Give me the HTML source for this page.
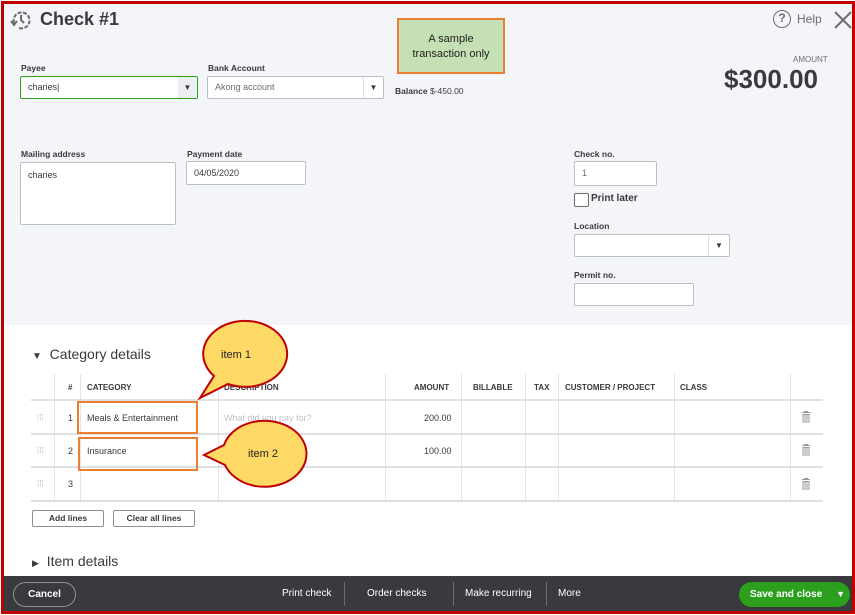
<!DOCTYPE html>
<html><head><style>
*{box-sizing:border-box;margin:0;padding:0}
body{width:855px;height:615px;position:relative;overflow:hidden;background:#fff;font-family:"Liberation Sans",sans-serif;color:#393a3d}
.a{position:absolute}
.lbl{font-size:8.5px;font-weight:bold;color:#393a3d}
.inp{background:#fff;border:1px solid #babec5;border-radius:2px;font-size:9px;padding-left:7px}
.th{font-size:8px;font-weight:bold;top:383px}
.td{font-size:9px}
</style></head><body>
<div class="a" style="left:2px;top:2px;width:851px;height:323px;background:#f4f5f8"></div>
<!-- header -->
<svg class="a" style="left:10px;top:9px" width="22" height="22" viewBox="0 0 22 22"><path d="M4 14 A8 8 0 1 1 9 19" fill="none" stroke="#6b6c72" stroke-width="2" stroke-dasharray="4 1.5"/><path d="M11 6 V11 L14 14" fill="none" stroke="#6b6c72" stroke-width="2"/><path d="M1 12 L4 16 L7 12" fill="none" stroke="#6b6c72" stroke-width="2"/></svg>
<div class="a" style="left:40px;top:9px;font-size:18px;font-weight:bold">Check #1</div>
<div class="a" style="left:773px;top:10px;width:18px;height:18px;border:1.6px solid #6b6c72;border-radius:50%;font-size:12px;font-weight:bold;text-align:center;line-height:15px;color:#6b6c72">?</div>
<div class="a" style="left:797px;top:12px;font-size:12px;color:#6b6c72">Help</div>
<svg class="a" style="left:833px;top:10px" width="20" height="20"><path d="M2 2L18 18M18 2L2 18" stroke="#6b6c72" stroke-width="2"/></svg>
<div class="a" style="left:397px;top:18px;width:108px;height:56px;background:#c5e0b4;border:2.5px solid #ed7d31;font-size:11px;text-align:center;padding-top:12px;line-height:15px;color:#222">A sample<br>transaction only</div>
<div class="a" style="left:793px;top:55px;font-size:8px;color:#6b6c72">AMOUNT</div>
<div class="a" style="left:724px;top:64px;font-size:26px;font-weight:bold;color:#393a3d">$300.00</div>
<!-- fields -->
<div class="a lbl" style="left:21px;top:63px">Payee</div>
<div class="a inp" style="left:20px;top:76px;width:178px;height:23px;border-color:#2ca01c;line-height:21px">charies|</div>
<div class="a" style="left:178px;top:77px;width:19px;height:21px;background:#eceef1;font-size:8px;text-align:center;line-height:21px">▼</div>
<div class="a lbl" style="left:208px;top:63px">Bank Account</div>
<div class="a inp" style="left:207px;top:76px;width:177px;height:23px;line-height:21px;color:#6b6c72">Akong account</div>
<div class="a" style="left:363px;top:77px;width:20px;height:21px;border-left:1px solid #dcdee2;font-size:8px;text-align:center;line-height:21px">▼</div>
<div class="a" style="left:395px;top:86px;font-size:8.5px;font-weight:bold;color:#393a3d">Balance <span style="font-weight:normal">$-450.00</span></div>
<div class="a lbl" style="left:21px;top:149px">Mailing address</div>
<div class="a inp" style="left:20px;top:162px;width:156px;height:63px;padding-top:7px">charies</div>
<div class="a lbl" style="left:187px;top:149px">Payment date</div>
<div class="a inp" style="left:186px;top:161px;width:120px;height:24px;line-height:22px">04/05/2020</div>
<div class="a lbl" style="left:574px;top:149px">Check no.</div>
<div class="a inp" style="left:574px;top:161px;width:83px;height:25px;line-height:23px;color:#6b6c72">1</div>
<div class="a" style="left:574px;top:193px;width:15px;height:14px;border:1.5px solid #6b6c72;border-radius:2px;background:#fff"></div>
<div class="a" style="left:591px;top:193px;font-size:10px;font-weight:bold">Print later</div>
<div class="a lbl" style="left:574px;top:221px">Location</div>
<div class="a inp" style="left:574px;top:234px;width:156px;height:23px"></div>
<div class="a" style="left:708px;top:235px;width:21px;height:21px;border-left:1px solid #dcdee2;font-size:8px;text-align:center;line-height:21px">▼</div>
<div class="a lbl" style="left:574px;top:270px">Permit no.</div>
<div class="a inp" style="left:574px;top:283px;width:120px;height:23px"></div>
<!-- category -->
<div class="a" style="left:32px;top:346px;font-size:14px"><span style="font-size:10px;color:#393a3d">▼</span>&nbsp; Category details</div>
<svg class="a" style="left:31px;top:374px" width="792" height="128">
<g stroke="#e3e5e8" stroke-width="1">
<line x1="23.5" y1="0" x2="23.5" y2="127"/><line x1="49.5" y1="0" x2="49.5" y2="127"/><line x1="187.5" y1="0" x2="187.5" y2="127"/><line x1="354.5" y1="0" x2="354.5" y2="127"/><line x1="430.5" y1="0" x2="430.5" y2="127"/><line x1="494.5" y1="0" x2="494.5" y2="127"/><line x1="527.5" y1="0" x2="527.5" y2="127"/><line x1="643.5" y1="0" x2="643.5" y2="127"/><line x1="759.5" y1="0" x2="759.5" y2="127"/></g>
<g stroke="#d4d7dc" stroke-width="1.5"><line x1="0" y1="26" x2="792" y2="26"/><line x1="0" y1="60" x2="792" y2="60"/><line x1="0" y1="93" x2="792" y2="93"/><line x1="0" y1="127" x2="792" y2="127"/></g>
</svg>
<div class="a th" style="left:68px">#</div>
<div class="a th" style="left:87px">CATEGORY</div>
<div class="a th" style="left:224px">DESCRIPTION</div>
<div class="a th" style="left:414px">AMOUNT</div>
<div class="a th" style="left:473px">BILLABLE</div>
<div class="a th" style="left:534px">TAX</div>
<div class="a th" style="left:565px">CUSTOMER / PROJECT</div>
<div class="a th" style="left:680px">CLASS</div>
<div class="a td" style="left:37px;top:413px;color:#aaa;font-size:8px">⁞⁞⁞</div>
<div class="a td" style="left:37px;top:446px;color:#aaa;font-size:8px">⁞⁞⁞</div>
<div class="a td" style="left:37px;top:479px;color:#aaa;font-size:8px">⁞⁞⁞</div>
<div class="a td" style="left:68px;top:413px">1</div>
<div class="a td" style="left:68px;top:446px">2</div>
<div class="a td" style="left:68px;top:479px">3</div>
<div class="a td" style="left:87px;top:413px">Meals &amp; Entertainment</div>
<div class="a td" style="left:87px;top:446px">Insurance</div>
<div class="a td" style="left:224px;top:413px;color:#c0c2c6">What did you pay for?</div>
<div class="a td" style="left:424px;top:413px">200.00</div>
<div class="a td" style="left:424px;top:446px">100.00</div>
<svg class="a" style="left:801px;top:411px" width="10" height="80"><g fill="none" stroke="#999" stroke-width="1"><path d="M1 1.5H9M3 0.5H7M2 3.5H8V11H2ZM4 4V10M6 4V10"/><path transform="translate(0,33)" d="M1 1.5H9M3 0.5H7M2 3.5H8V11H2ZM4 4V10M6 4V10"/><path transform="translate(0,67)" d="M1 1.5H9M3 0.5H7M2 3.5H8V11H2ZM4 4V10M6 4V10"/></g></svg>
<div class="a" style="left:77px;top:401px;width:121px;height:33px;border:2.5px solid #ed7d31"></div>
<div class="a" style="left:78px;top:437px;width:120px;height:34px;border:2.5px solid #ed7d31"></div>
<svg class="a" style="left:0;top:0" width="855" height="615">
<path d="M200 398 L214 376 A42 33 0 1 1 228 384 Z" fill="#ffd966" stroke="#c00000" stroke-width="2"/>
<path d="M204 455 L224 445 A42 33 0 1 1 225 465 Z" fill="#ffd966" stroke="#c00000" stroke-width="2"/>
<text x="221" y="358" font-family="Liberation Sans" font-size="11" fill="#222">item 1</text>
<text x="248" y="457" font-family="Liberation Sans" font-size="11" fill="#222">item 2</text>
</svg>
<div class="a" style="left:32px;top:510px;width:72px;height:17px;border:1px solid #8d9096;border-radius:2px;font-size:8.5px;font-weight:bold;text-align:center;line-height:15px">Add lines</div>
<div class="a" style="left:113px;top:510px;width:82px;height:17px;border:1px solid #8d9096;border-radius:2px;font-size:8.5px;font-weight:bold;text-align:center;line-height:15px">Clear all lines</div>
<div class="a" style="left:32px;top:553px;font-size:14px"><span style="font-size:9px">▶</span>&nbsp; Item details</div>
<!-- footer -->
<div class="a" style="left:2px;top:576px;width:851px;height:36px;background:#393a3d"></div>
<div class="a" style="left:13px;top:582px;width:63px;height:25px;border:1px solid #8d9096;border-radius:13px;color:#fff;font-size:10px;font-weight:bold;text-align:center;line-height:23px">Cancel</div>
<div class="a" style="left:282px;top:588px;font-size:10px;color:#fff">Print check</div>
<div class="a" style="left:344px;top:582px;width:1px;height:24px;background:#6b6c72"></div>
<div class="a" style="left:367px;top:588px;font-size:10px;color:#fff">Order checks</div>
<div class="a" style="left:453px;top:582px;width:1px;height:24px;background:#6b6c72"></div>
<div class="a" style="left:465px;top:588px;font-size:10px;color:#fff">Make recurring</div>
<div class="a" style="left:546px;top:582px;width:1px;height:24px;background:#6b6c72"></div>
<div class="a" style="left:558px;top:588px;font-size:10px;color:#fff">More</div>
<div class="a" style="left:739px;top:582px;width:111px;height:25px;background:#2ca01c;border-radius:13px;color:#fff;font-size:10px;font-weight:bold;line-height:25px;padding-left:11px">Save and close <span style="position:absolute;right:5px;font-size:9px">▼</span></div>
<!-- red border -->
<div class="a" style="left:1px;top:1px;width:854px;height:613px;border:3px solid #c00000"></div>
</body></html>
